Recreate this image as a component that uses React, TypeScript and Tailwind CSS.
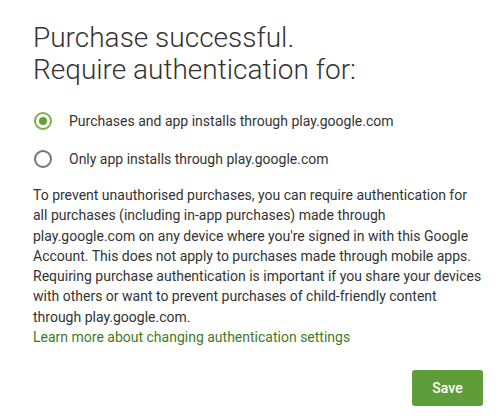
import { useState } from 'react';

interface Option {
  id: string;
  label: string;
}

const options: Option[] = [
  { id: 'all', label: 'Purchases and app installs through play.google.com' },
  { id: 'apps', label: 'Only app installs through play.google.com' },
];

function Radio({ checked }: { checked: boolean }) {
  return (
    <span
      className={
        checked
          ? 'flex h-[18px] w-[18px] items-center justify-center rounded-full border-2 border-[#7cb24e]'
          : 'flex h-[18px] w-[18px] items-center justify-center rounded-full border-2 border-[#757575]'
      }
    >
      {checked && <span className="h-[8px] w-[8px] rounded-full bg-[#689f38]" />}
    </span>
  );
}

export default function App() {
  const [selected, setSelected] = useState('all');

  return (
    <div className="h-[420px] w-[501px] bg-white pl-[33px] pr-[18px] pt-[22px] font-['Roboto',sans-serif] text-[#212121]">
      {/* Title */}
      <h1 className="text-[28px] font-light leading-[32px] text-[#333]">
        Purchase successful.
        <br />
        Require authentication for:
      </h1>

      {/* Options */}
      <div className="mt-[26px] flex flex-col gap-[20px]">
        {options.map((opt) => (
          <label
            key={opt.id}
            className="flex cursor-pointer items-center"
            onClick={() => setSelected(opt.id)}
          >
            <span className="ml-[1px] w-[35px]">
              <Radio checked={selected === opt.id} />
            </span>
            <span className="text-[14px] leading-[18px] text-[#333]">{opt.label}</span>
          </label>
        ))}
      </div>

      {/* Description */}
      <p className="mt-[17px] text-[14px] leading-[20.3px] text-[#333]">
        To prevent unauthorised purchases, you can require authentication for all purchases
        (including in-app purchases) made through play.google.com on any device where you're
        signed in with this Google Account. This does not apply to purchases made through mobile
        apps. Requiring purchase authentication is important if you share your devices with
        others or want to prevent purchases of child-friendly content through play.google.com.
      </p>
      <a href="#" className="block text-[14px] leading-[20.3px] text-[#3e7b27]">
        Learn more about changing authentication settings
      </a>

      {/* Footer */}
      <div className="mt-[23px] flex justify-end">
        <button className="h-[36px] w-[71px] rounded-[3px] bg-[#5f9c3a] text-[14px] font-medium text-white">
          Save
        </button>
      </div>
    </div>
  );
}
